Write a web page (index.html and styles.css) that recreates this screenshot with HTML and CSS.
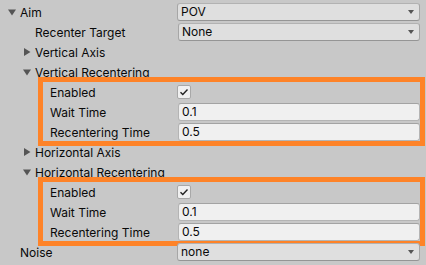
FILE: index.html
```html
<!DOCTYPE html>
<html>
<head>
  <title>Aim</title>
  <link rel="stylesheet" href="styles.css">
</head>
<body>
  <div class="inspector">
    <div class="row">
      <div class="label lvl0"><span class="fold"><svg viewBox="0 0 8 8"><path d="M0 1.5h8L4 7.5z"/></svg></span>Aim</div>
      <div class="value"><div class="popup">POV<span class="caret"></span></div></div>
    </div>
    <div class="row sub">
      <div class="label lvl1"><span class="fold"></span>Recenter Target</div>
      <div class="value"><div class="popup">None<span class="caret"></span></div></div>
    </div>
    <div class="row">
      <div class="label lvl1"><span class="fold"><svg viewBox="0 0 8 8"><path d="M1 0v8l6.5-4z"/></svg></span>Vertical Axis</div>
    </div>
    <div class="row">
      <div class="label lvl1"><span class="fold"><svg viewBox="0 0 8 8"><path d="M0 1.5h8L4 7.5z"/></svg></span>Vertical Recentering</div>
    </div>

    <!-- highlighted group -->
    <div class="group">
      <div class="row">
        <div class="label lvl2"><span class="fold"></span>Enabled</div>
        <div class="value"><span class="check"><svg viewBox="0 0 10 10"><path d="M1.5 5.2l2.3 2.3 4.7-5"/></svg></span></div>
      </div>
      <div class="row sub">
        <div class="label lvl2"><span class="fold"></span>Wait Time</div>
        <div class="value"><div class="field">0.1</div></div>
      </div>
      <div class="row sub">
        <div class="label lvl2"><span class="fold"></span>Recentering Time</div>
        <div class="value"><div class="field">0.5</div></div>
      </div>
    </div>

    <div class="row">
      <div class="label lvl1"><span class="fold"><svg viewBox="0 0 8 8"><path d="M1 0v8l6.5-4z"/></svg></span>Horizontal Axis</div>
    </div>
    <div class="row">
      <div class="label lvl1"><span class="fold"><svg viewBox="0 0 8 8"><path d="M0 1.5h8L4 7.5z"/></svg></span>Horizontal Recentering</div>
    </div>

    <div class="group">
      <div class="row">
        <div class="label lvl2"><span class="fold"></span>Enabled</div>
        <div class="value"><span class="check"><svg viewBox="0 0 10 10"><path d="M1.5 5.2l2.3 2.3 4.7-5"/></svg></span></div>
      </div>
      <div class="row sub">
        <div class="label lvl2"><span class="fold"></span>Wait Time</div>
        <div class="value"><div class="field">0.1</div></div>
      </div>
      <div class="row sub">
        <div class="label lvl2"><span class="fold"></span>Recentering Time</div>
        <div class="value"><div class="field">0.5</div></div>
      </div>
    </div>

    <div class="row">
      <div class="label lvl0"><span class="fold"></span>Noise</div>
      <div class="value"><div class="popup">none<span class="caret"></span></div></div>
    </div>
  </div>
</body>
</html>
```

FILE: styles.css
```css
* {
  box-sizing: border-box;
  margin: 0;
  padding: 0;
}

body {
  background: #c8c8c8;
  color: #090909;
  font-family: Inter, 'Noto Sans', sans-serif;
  font-size: 12px;
  overflow: hidden;
}

.inspector {
  padding: 2px 6px 0 0;
}

.row {
  display: grid;
  grid-template-columns: 177px 1fr;
  align-items: center;
  height: 20px;
}

.label {
  display: flex;
  align-items: center;
  white-space: nowrap;
}

.lvl0 { padding-left: 6px; }
.lvl1 { padding-left: 21px; }
.lvl2 { padding-left: 36px; }

.fold {
  display: flex;
  align-items: center;
  width: 14px;
  height: 14px;
  padding-left: 2px;
}

.fold svg {
  width: 8px;
  height: 8px;
  fill: #555;
}

.sub .value {
  padding-left: 1px;
}

.popup,
.field {
  position: relative;
  height: 18px;
  line-height: 16px;
  padding: 0 3px;
  border: 1px solid #a0a0a0;
  border-radius: 3px;
}

.popup {
  background: #dfdfdf;
  border-color: #b2b2b2 #a6a6a6 #959595;
}

.field {
  background: #f0f0f0;
  border-color: #a3a3a3 #b4b4b4 #b4b4b4;
}

.caret {
  position: absolute;
  right: 5px;
  top: 6px;
  width: 0;
  height: 0;
  border-left: 3.5px solid transparent;
  border-right: 3.5px solid transparent;
  border-top: 4px solid #555;
}

.check {
  display: flex;
  align-items: center;
  justify-content: center;
  width: 14px;
  height: 14px;
  background: #f0f0f0;
  border: 1px solid #a8a8a8;
  border-radius: 2px;
}

.check svg {
  width: 10px;
  height: 10px;
  fill: none;
  stroke: #222;
  stroke-width: 1.4;
}

.group {
  position: relative;
}

.group::after {
  content: '';
  position: absolute;
  top: -5px;
  bottom: -4px;
  left: 38px;
  right: -5px;
  border: 5px solid #fe8328;
}
```
